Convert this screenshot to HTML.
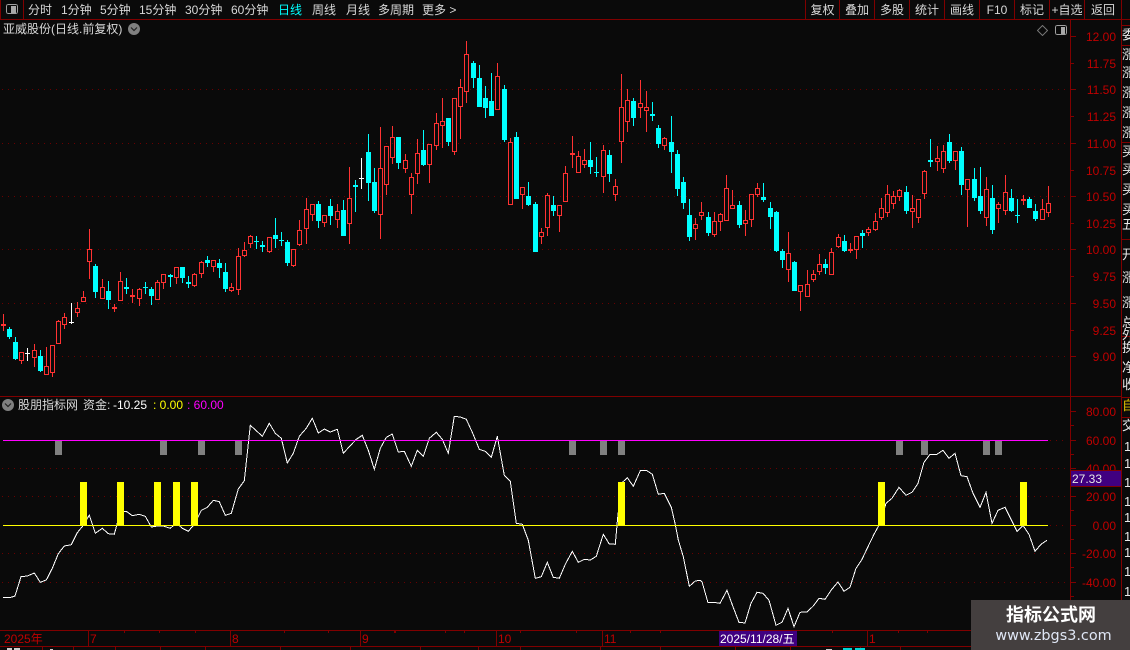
<!DOCTYPE html>
<html><head><meta charset="utf-8"><style>
html,body{margin:0;padding:0;background:#0a0a0a}
#r{position:relative;width:1130px;height:650px;overflow:hidden;background:#0a0a0a;font:12px/14px "Liberation Sans","WenQuanYi Zen Hei","Noto Sans CJK SC",sans-serif;color:#d8d8d8}
#r span,#r div.t{position:absolute;white-space:nowrap}
svg{position:absolute;left:0;top:0}
.c{text-align:center}
.a{color:#c00000;right:14px;text-align:right;font-size:12px}
.s{left:1122px;font-size:13px;color:#e8e8e8}
.d{color:#c00000}
</style></head><body><div id="r">
<svg id="g" width="1130" height="650" viewBox="0 0 1130 650"></svg>

<span style="left:28px;top:3px">分时</span>
<span style="left:61px;top:3px">1分钟</span>
<span style="left:100px;top:3px">5分钟</span>
<span style="left:139px;top:3px">15分钟</span>
<span style="left:185px;top:3px">30分钟</span>
<span style="left:231px;top:3px">60分钟</span>
<span style="left:278px;top:3px;color:#00ffff">日线</span>
<span style="left:312px;top:3px">周线</span>
<span style="left:346px;top:3px">月线</span>
<span style="left:378px;top:3px">多周期</span>
<span style="left:422px;top:3px">更多 &gt;</span>

<span class="c" style="left:806px;width:33px;top:3px">复权</span>
<span class="c" style="left:840px;width:34px;top:3px">叠加</span>
<span class="c" style="left:875px;width:34px;top:3px">多股</span>
<span class="c" style="left:910px;width:34px;top:3px">统计</span>
<span class="c" style="left:945px;width:34px;top:3px">画线</span>
<span class="c" style="left:980px;width:34px;top:3px">F10</span>
<span class="c" style="left:1015px;width:34px;top:3px">标记</span>
<span class="c" style="left:1050px;width:34px;top:3px">+自选</span>
<span class="c" style="left:1085px;width:36px;top:3px">返回</span>

<span style="left:3px;top:22px">亚威股份(日线.前复权)</span>

<span class="a" style="top:30px">12.00</span>
<span class="a" style="top:57px">11.75</span>
<span class="a" style="top:83px">11.50</span>
<span class="a" style="top:110px">11.25</span>
<span class="a" style="top:137px">11.00</span>
<span class="a" style="top:164px">10.75</span>
<span class="a" style="top:190px">10.50</span>
<span class="a" style="top:217px">10.25</span>
<span class="a" style="top:243px">10.00</span>
<span class="a" style="top:270px">9.75</span>
<span class="a" style="top:297px">9.50</span>
<span class="a" style="top:324px">9.25</span>
<span class="a" style="top:350px">9.00</span>

<span class="s" style="top:28px">委</span><span class="s" style="top:48px">涨</span><span class="s" style="top:66px">涨</span><span class="s" style="top:86px">涨</span><span class="s" style="top:106px">涨</span><span class="s" style="top:126px">涨</span>
<span class="s" style="top:145px">买</span><span class="s" style="top:163px">买</span><span class="s" style="top:183px">买</span><span class="s" style="top:203px">买</span><span class="s" style="top:218px">五</span>
<span class="s" style="top:248px">开</span><span class="s" style="top:271px">涨</span><span class="s" style="top:296px">涨</span><span class="s" style="top:316px">总</span><span class="s" style="top:328px">外</span>
<span class="s" style="top:341px">换</span><span class="s" style="top:361px">净</span><span class="s" style="top:378px">收</span>
<span class="s" style="top:399px;color:#e0c000">自</span><span class="s" style="top:419px">交</span>
<span class="s" style="top:440px;left:1124px">1</span><span class="s" style="top:457px;left:1124px">1</span><span class="s" style="top:476px;left:1124px">1</span><span class="s" style="top:495px;left:1124px">1</span><span class="s" style="top:511px;left:1124px">1</span><span class="s" style="top:530px;left:1124px">1</span><span class="s" style="top:546px;left:1124px">1</span><span class="s" style="top:565px;left:1124px">1</span><span class="s" style="top:585px;left:1124px">1</span>

<span style="left:18px;top:398px">股朋指标网</span>
<span style="left:83px;top:398px">资金:</span>
<span style="left:113px;top:398px;color:#fff">-10.25</span>
<span style="left:153px;top:398px;color:#ffff00">: 0.00</span>
<span style="left:187px;top:398px;color:#ff00ff">: 60.00</span>

<span class="a" style="top:405px">80.00</span>
<span class="a" style="top:434px">60.00</span>
<span class="a" style="top:462px">40.00</span>
<span class="a" style="top:490px">20.00</span>
<span class="a" style="top:519px">0.00</span>
<span class="a" style="top:547px">-20.00</span>
<span class="a" style="top:576px">-40.00</span>

<div class="t" style="left:1071px;top:470px;width:50px;height:15px;background:#400080;border-top:1px solid #800000;border-bottom:1px solid #800000"></div>
<span style="left:1072px;top:472px;color:#e8e8e8">27.33</span>

<span class="d" style="left:4px;top:632px">2025年</span>
<span class="d" style="left:90px;top:632px">7</span>
<span class="d" style="left:232px;top:632px">8</span>
<span class="d" style="left:362px;top:632px">9</span>
<span class="d" style="left:498px;top:632px">10</span>
<span class="d" style="left:604px;top:632px">11</span>
<span class="d" style="left:869px;top:632px">1</span>
<div class="t" style="left:719px;top:631px;width:78px;height:15px;background:#400080"></div>
<span style="left:720px;top:632px;color:#fff">2025/11/28/五</span>

<div class="t" style="left:971px;top:600px;width:159px;height:50px;background:#443f3f"></div>
<span class="c" style="left:971px;width:160px;top:604px;font-size:18px;line-height:22px;font-weight:bold;color:#fff">指标公式网</span>
<span class="c" style="left:974px;width:159px;top:627px;font-family:'DejaVu Sans',sans-serif;font-size:14.4px;line-height:18px;color:#dfe6f5">www.zbgs3.com</span>
</div>
<script>
var Z3=[[10,522,552,557,573,'r'],[28,561,567,591,597,'c'],[46,591,606,657,660,'c'],[64,637,637,662,672,'r'],[82,624,639,641,663,'w'],[103,612,631,653,681,'r'],[121,630,648,693,696,'c'],[139,621,679,704,704,'r'],[157,616,616,698,711,'r'],[175,541,544,611,611,'r'],[193,519,532,554,567,'r'],[214,489,545,547,552,'w'],[232,486,505,518,531,'r'],[250,453,472,485,485,'r'],[268,267,328,365,417,'r'],[286,373,378,456,474,'c'],[307,417,442,476,476,'r'],[325,423,453,480,507,'c'],[343,492,501,506,516,'f'],[361,396,424,482,482,'r'],[379,414,441,446,462,'c'],[397,447,465,470,489,'f'],[418,445,448,476,498,'r'],[436,426,441,443,462,'c'],[454,441,447,468,495,'c'],[472,420,427,479,479,'r'],[490,403,403,428,447,'r'],[511,402,405,411,441,'c'],[529,382,382,413,432,'r'],[547,381,381,414,429,'c'],[565,408,426,431,444,'c'],[583,399,403,437,441,'r'],[604,363,367,403,414,'r'],[622,348,360,369,381,'c'],[640,361,361,380,396,'r'],[658,357,369,384,414,'c'],[676,369,396,447,456,'c'],[694,429,442,453,456,'r'],[715,324,349,449,465,'r'],[733,306,331,347,351,'r'],[751,286,289,311,324,'r'],[769,288,303,305,327,'c'],[787,303,315,320,336,'c'],[808,292,292,335,339,'r'],[826,234,285,297,324,'c'],[844,276,300,302,318,'c'],[862,300,306,369,378,'c'],[880,327,327,378,381,'r'],[898,240,271,315,318,'r'],[919,174,208,268,312,'r'],[937,193,193,226,243,'r'],[955,183,192,243,264,'c'],[973,226,226,250,261,'r'],[991,177,198,228,255,'c'],[1012,192,214,239,264,'r'],[1030,180,210,288,288,'c'],[1048,81,175,251,312,'r']];
var Z4=[[16,450,465,470,546,'c'],[34,384,445,447,477,'w'],[55,312,366,459,513,'c'],[73,414,456,543,549,'c'],[91,291,415,554,627,'r'],[109,349,349,464,496,'r'],[127,288,322,383,402,'r'],[145,321,321,399,417,'c'],[166,372,391,416,429,'r'],[184,429,442,494,552,'r'],[202,327,370,431,462,'r'],[220,300,360,405,408,'c'],[238,343,343,404,459,'r'],[259,249,280,349,360,'r'],[277,204,274,287,354,'r'],[295,264,264,336,348,'c'],[313,205,205,365,375,'r'],[331,147,172,230,327,'r'],[349,33,73,185,219,'r'],[370,93,99,144,174,'c'],[388,105,144,231,231,'c'],[406,168,204,234,264,'c'],[424,129,213,258,258,'c'],[442,99,139,239,239,'r'],[463,165,177,330,336,'c'],[481,324,337,524,524,'r'],[499,306,321,507,507,'c'],[517,472,472,494,537,'r'],[535,456,498,525,528,'c'],[556,516,522,666,666,'c'],[574,594,607,620,642,'r'],[592,489,496,593,618,'r'],[610,498,525,543,558,'c'],[628,526,526,557,606,'r'],[646,408,430,515,515,'r'],[667,318,370,376,414,'r'],[685,363,379,428,428,'r'],[703,357,391,404,414,'r'],[721,336,390,411,432,'c'],[739,381,426,429,441,'c'],[760,345,361,440,489,'r'],[778,360,375,432,456,'c'],[796,447,469,494,513,'r'],[814,132,232,335,399,'r'],[832,177,211,275,306,'r'],[850,204,213,264,288,'c'],[871,150,220,233,264,'r'],[889,183,232,242,306,'r'],[907,216,252,258,273,'c'],[925,285,294,342,354,'c'],[943,321,325,347,360,'r'],[964,258,336,366,429,'c'],[982,360,372,477,498,'c'],[1000,441,456,519,537,'c'],[1018,507,555,621,633,'c'],[1036,564,583,596,630,'r']];
var Z5=[[4,246,277,289,300,'r'],[25,276,291,339,348,'c'],[43,276,304,344,351,'r'],[61,279,283,305,333,'r'],[79,165,205,302,302,'r'],[97,210,256,266,266,'r'],[118,243,255,315,324,'c'],[136,270,301,311,348,'r'],[154,222,222,299,321,'r'],[172,189,205,224,231,'r'],[190,189,231,240,246,'c'],[211,246,264,291,327,'c'],[229,273,276,393,396,'c'],[247,387,393,420,444,'c'],[265,336,400,449,486,'r'],[283,423,426,513,513,'c'],[301,496,496,515,573,'r'],[322,450,493,530,530,'r'],[340,450,463,479,486,'r'],[358,402,433,455,465,'r'],[376,417,432,444,462,'c'],[394,384,397,464,464,'r'],[415,342,352,380,384,'r'],[433,345,363,393,396,'c'],[451,369,388,392,399,'f'],[469,348,349,389,417,'r'],[487,330,339,348,384,'c'],[505,321,328,339,348,'r'],[526,279,304,329,333,'r'],[544,234,265,293,300,'r'],[562,195,223,278,291,'r'],[580,213,229,251,267,'r'],[598,207,211,231,243,'r'],[619,198,216,273,282,'c'],[637,225,265,275,324,'r'],[655,237,238,293,309,'r'],[673,150,154,221,237,'r'],[691,57,120,126,141,'c'],[712,78,115,125,153,'r'],[730,75,94,147,159,'r'],[748,42,66,123,129,'c'],[766,94,94,122,150,'r'],[784,81,93,195,225,'c'],[802,177,178,209,321,'r'],[823,144,177,234,243,'c'],[841,141,228,273,282,'c'],[859,171,208,293,318,'r'],[877,195,234,330,342,'c'],[895,246,253,266,309,'r'],[916,165,217,272,285,'r'],[934,207,234,273,276,'c'],[952,237,286,288,309,'c'],[970,225,237,243,255,'f'],[988,231,237,264,264,'c'],[1006,252,273,297,303,'c'],[1027,237,268,299,299,'r'],[1045,198,250,278,291,'r']];
var C={r:'#ff3232',f:'#ff3232',c:'#00ffff',w:'#ffffff'};
var o=[];
function R(x,y,w,h,c){if(h>0&&w>0)o.push('<rect x="'+x+'" y="'+y+'" width="'+w+'" height="'+h+'" fill="'+c+'"/>');}
function dot(y,x1,x2){o.push('<line x1="'+x1+'" x2="'+x2+'" y1="'+(y+.5)+'" y2="'+(y+.5)+'" stroke="#6a0000" stroke-dasharray="1 5"/>');}
[89,143,196,249,303,356].forEach(function(y){dot(y,2,1066)});
[468,496,553,582].forEach(function(y){dot(y,2,1066)});
[440,525].forEach(function(y){dot(y,1050,1066)});
function cs(a,ox,oy){a.forEach(function(k){
 var cx=Math.floor(k[0]/3+ox),h=Math.round(k[1]/3+oy),t=Math.round(k[2]/3+oy),b=Math.round(k[3]/3+oy),l=Math.round(k[4]/3+oy),c=C[k[5]];
 if(b<=t)b=t+1;
 R(cx,h,1,t-h,c);R(cx,b,1,l-b,c);
 if(k[5]=='r'&&b-t>2){R(cx-2,t,5,1,c);R(cx-2,b-1,5,1,c);R(cx-2,t,1,b-t,c);R(cx+2,t,1,b-t,c);}
 else R(cx-2,t,5,b-t,c);
});}
cs(Z3,0,140);cs(Z4,350,30);cs(Z5,700,120);
var L6=[9,622,33,622,45,618,63,560,82,558,103,549,121,577,139,570,157,535,175,491,193,468,214,464,232,428,250,406,268,375,286,430,307,415,325,431,343,433,361,366,379,364,397,377,418,373,436,379,454,411,472,408,490,408,511,415,529,399,547,415,565,424,583,403,604,361,622,352,640,331,658,335,676,376,694,370,715,297,733,272,751,106,769,122,787,139,808,100,826,130,844,145,862,219,880,190,898,139,919,115,937,85,955,129,973,117,991,126,1012,118,1030,190,1048,170];
var L7=[19,148,37,136,55,181,73,238,91,175,109,142,127,132,145,186,163,184,184,229,202,181,220,199,238,145,259,127,277,148,295,190,313,79,331,81,349,88,367,127,388,178,406,184,424,202,442,139,463,256,481,274,499,400,517,403,535,451,556,565,574,560,592,517,610,562,628,565,646,523,667,484,685,517,703,508,721,510,739,499,760,433,778,462,796,463,802,395,814,280,832,263,850,289,871,242,889,241,907,253,925,313,943,310,964,352,975,400,985,450,1000,500,1018,589,1036,573,1050,571];
var L8=[6,575,24,638,42,637,60,640,81,601,99,650,117,697,135,699,153,640,171,607,189,610,207,631,228,706,246,697,264,655,282,710,300,667,321,666,339,649,357,625,375,628,393,601,414,576,432,604,450,592,468,535,486,508,504,470,522,433,540,400,558,340,576,325,597,292,618,316,636,307,654,280,672,217,690,193,711,193,729,181,747,205,765,190,783,257,801,260,819,310,840,352,858,307,876,400,894,361,915,352,933,388,951,424,969,406,987,433,1005,484,1023,463,1041,451];
var p=[];
function ad(a,ox){for(var i=0;i<a.length;i+=2)p.push((a[i]/3+ox).toFixed(1)+','+(a[i+1]/3+390).toFixed(1));}
ad(L6,0);ad(L7,350);ad(L8,700);
o.push('<polyline points="'+p.join(' ')+'" fill="none" stroke="#fff" stroke-width="1"/>');
R(3,440,1045,1,'#ff00ff');
R(3,525,1045,1,'#ffff00');
[55,160,198,235,569,600,618,896,921,983,995].forEach(function(x){R(x,441,7,14,'#808080')});
[80,117,154,173,191,618,878,1020].forEach(function(x){R(x,482,7,43,'#ffff00')});
var D='#800000';
R(0,19,1130,1,D);
[0,23,805,839,874,909,944,979,1014,1049,1084,1121].forEach(function(x){R(x,0,1,19,D)});
R(1070,20,1,630,D);R(1121,20,1,630,D);
R(0,396,1121,1,D);R(0,630,1121,1,D);R(0,646,1121,1,D);
[25,45,142,239,336,397,417].forEach(function(y){R(1122,y,8,1,D)});
var M=[36,63,89,116,143,170,196,223,249,276,303,330,356];
M.forEach(function(y,i){R(1071,y,i%2?3:5,1,D)});
[411,440,468,496,525,553,582].forEach(function(y){R(1071,y,5,1,D)});
[425,454,482,510,539,567,596].forEach(function(y){R(1071,y,3,1,D)});
[88,230,360,496,602,867].forEach(function(x){R(x,630,1,17,D)});
[124,159,195,284,328,394,395,445,464,520,576,630,660,770,832,898,927].forEach(function(x){R(x,630,1,3,D)});
[42,73,115,160,205,280,350,420,478,520,600,660,735,790,860,900].forEach(function(x){R(x,647,1,3,D)});
/* cropped text fragments at the very bottom */
R(7,648,5,2,'#cfcfcf');R(14,648,6,2,'#cfcfcf');R(50,649,3,1,'#cfcfcf');R(826,649,6,1,'#cfcfcf');R(843,648,9,2,'#00d8d8');R(855,648,10,2,'#00d8d8');
/* toolbar icon */
o.push('<rect x="6.5" y="4.5" width="11" height="9" rx="2" fill="none" stroke="#a0a0a0"/>');
R(11,6,5,7,'#a8a8a8');
/* chart top-right icons */
o.push('<path d="M1042.5 25.5 L1047.5 30.5 L1042.5 35.5 L1037.5 30.5 Z" fill="none" stroke="#707070"/>');
o.push('<rect x="1055.5" y="25.5" width="11" height="9" rx="2" fill="none" stroke="#a0a0a0"/>');
R(1061,27,4,7,'#a8a8a8');
/* dropdown circles */
function ci(x,y){o.push('<circle cx="'+x+'" cy="'+y+'" r="6" fill="#808080"/><path d="M'+(x-3)+' '+(y-1.5)+' L'+x+' '+(y+1.5)+' L'+(x+3)+' '+(y-1.5)+'" fill="none" stroke="#222" stroke-width="1.2"/>');}
ci(134,29);ci(8,405);
var g=document.getElementById('g');
g.setAttribute('shape-rendering','crispEdges');
g.innerHTML=o.join('');
g.querySelectorAll('circle,circle+path').forEach(function(e){e.setAttribute('shape-rendering','auto')});
</script>
</body></html>
